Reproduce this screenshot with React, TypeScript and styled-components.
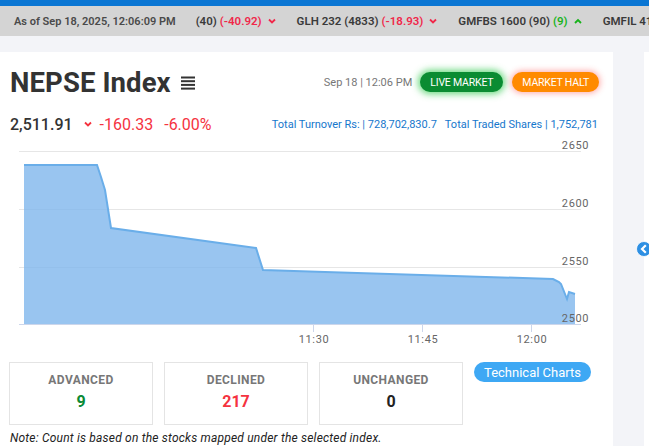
import styled, { createGlobalStyle } from 'styled-components'

const GlobalStyle = createGlobalStyle`
  body {
    margin: 0;
    background: #f3f4f8;
    font-family: Roboto, "Noto Sans", Arial, sans-serif;
    overflow: hidden;
  }
`

interface TickItem {
  label: string
  change: string
  up: boolean
}

const ticks: TickItem[] = [
  { label: '(40)', change: '(-40.92)', up: false },
  { label: 'GLH 232 (4833)', change: '(-18.93)', up: false },
  { label: 'GMFBS 1600 (90)', change: '(9)', up: true },
  { label: 'GMFIL 412 (1200)', change: '(-3.10)', up: false },
]

const stats = [
  { label: 'ADVANCED', value: '9', tone: 'up' },
  { label: 'DECLINED', value: '217', tone: 'down' },
  { label: 'UNCHANGED', value: '0', tone: 'flat' },
]

const Chevron = ({ up, color }: { up?: boolean; color: string }) => (
  <svg width="8" height="6" viewBox="0 0 8 6">
    <path
      d={up ? 'M1 5 L4 2 L7 5' : 'M1 1.5 L4 4.5 L7 1.5'}
      fill="none"
      stroke={color}
      strokeWidth="1.8"
    />
  </svg>
)

const MenuIcon = () => (
  <svg width="14" height="14" viewBox="0 0 14 14">
    <rect x="0" y="0.5" width="14" height="2" fill="#333" />
    <rect x="0" y="4.2" width="14" height="2" fill="#333" />
    <rect x="0" y="7.9" width="14" height="2" fill="#333" />
    <rect x="0" y="11.6" width="14" height="2" fill="#333" />
  </svg>
)

const area =
  '24,25 97,25 101,37 105,50 111,88 256,108 263,130 325,132 553,139 559,142 561,144 567,159 569,152 575,154'

const IndexChart = () => (
  <ChartSvg width="613" height="210" viewBox="0 0 613 210">
    {[11, 69, 127].map((y) => (
      <line key={y} x1="19" x2="581" y1={y + 0.5} y2={y + 0.5} stroke="#e6e6e6" />
    ))}
    <polygon points={`${area} 575,184 24,184`} fill="#7cb5ec" fillOpacity="0.78" />
    <polyline points={area} fill="none" stroke="#6aaee9" strokeWidth="2" />
    <line x1="19" x2="581" y1="184.5" y2="184.5" stroke="#ccd6eb" />
    {[313, 422, 531].map((x) => (
      <line key={x} x1={x + 0.5} x2={x + 0.5} y1="184" y2="192" stroke="#ccd6eb" />
    ))}
    <g fill="#666" fontSize="11" fontFamily="Roboto, sans-serif" letterSpacing="0.6">
      <text x="589" y="9" textAnchor="end">2650</text>
      <text x="589" y="67" textAnchor="end">2600</text>
      <text x="589" y="125" textAnchor="end">2550</text>
      <text x="589" y="182" textAnchor="end">2500</text>
      <text x="314" y="203" textAnchor="middle">11:30</text>
      <text x="423" y="203" textAnchor="middle">11:45</text>
      <text x="532" y="203" textAnchor="middle">12:00</text>
    </g>
  </ChartSvg>
)

const App = () => {
  return (
    <>
      <GlobalStyle />
      <TopStrip />
      <Ticker>
        <AsOf>As of Sep 18, 2025, 12:06:09 PM</AsOf>
        <TickerDivider />
        {ticks.map((t) => (
          <TickerItem key={t.label}>
            <span>{t.label}</span>
            <TickChange $up={t.up}>{t.change}</TickChange>
            <Chevron up={t.up} color={t.up ? '#17b31a' : '#f0284a'} />
          </TickerItem>
        ))}
      </Ticker>
      <Content>
        <Card>
          <HeaderRow>
            <Title>
              NEPSE Index <MenuIcon />
            </Title>
            <HeaderRight>
              <DateStamp>Sep 18 | 12:06 PM</DateStamp>
              <StatusPill $kind="live">LIVE MARKET</StatusPill>
              <StatusPill $kind="halt">MARKET HALT</StatusPill>
            </HeaderRight>
          </HeaderRow>
          <ValueRow>
            <IndexValue>
              <strong>2,511.91</strong>
              <Chevron color="#f5333f" />
              <Change>-160.33</Change>
              <Change>-6.00%</Change>
            </IndexValue>
            <Turnover>
              <span>Total Turnover Rs: | 728,702,830.7</span>
              <span>Total Traded Shares | 1,752,781</span>
            </Turnover>
          </ValueRow>
          <IndexChart />
          <StatsRow>
            {stats.map((s) => (
              <StatBox key={s.label}>
                <StatLabel>{s.label}</StatLabel>
                <StatValue $tone={s.tone}>{s.value}</StatValue>
              </StatBox>
            ))}
            <ChartsButton>Technical Charts</ChartsButton>
          </StatsRow>
          <Note>Note: Count is based on the stocks mapped under the selected index.</Note>
        </Card>
        <SideCard />
        <SideToggle>
          <svg width="16" height="16" viewBox="0 0 16 16">
            <circle cx="8" cy="8" r="7.5" fill="#2d8fe3" stroke="#ffffff" strokeWidth="0.8" />
            <path d="M9.8 4.2 L6 8 L9.8 11.8" fill="none" stroke="#fff" strokeWidth="2.2" />
          </svg>
        </SideToggle>
      </Content>
    </>
  )
}

export default App

const TopStrip = styled.div`
  height: 6px;
  background: #0a76d3;
`

const Ticker = styled.div`
  height: 30px;
  background: #d4d4d4;
  display: flex;
  align-items: center;
  padding-left: 14px;
  white-space: nowrap;
  overflow: hidden;
  font-size: 11.5px;
  font-weight: 600;
  color: #3a3a3a;
`

const AsOf = styled.span`
  font-size: 11px;
  color: #4a4a4a;
`

const TickerDivider = styled.span`
  width: 1px;
  height: 14px;
  background: #9a9a9a;
  margin: 0 10px 0 10px;
`

const TickerItem = styled.span`
  display: inline-flex;
  align-items: center;
  gap: 3px;
  margin-right: 21px;
  svg {
    margin-left: 3px;
  }
`

const TickChange = styled.span<{ $up: boolean }>`
  color: ${(p) => (p.$up ? '#17b31a' : '#f0284a')};
`

const Content = styled.div`
  position: relative;
  display: flex;
  gap: 31px;
  padding-top: 16px;
`

const Card = styled.div`
  width: 613px;
  flex-shrink: 0;
  background: #fff;
  height: 410px;
`

const SideCard = styled.div`
  flex: 1;
  background: #fff;
  height: 410px;
`

const SideToggle = styled.div`
  position: absolute;
  left: 636px;
  top: 205px;
  width: 16px;
  height: 16px;
  svg {
    display: block;
  }
`

const HeaderRow = styled.div`
  display: flex;
  align-items: center;
  justify-content: space-between;
  padding: 14px 14px 0 10px;
  height: 32px;
`

const Title = styled.h1`
  margin: 0;
  display: flex;
  align-items: center;
  gap: 10px;
  font-size: 27.5px;
  font-weight: 700;
  color: #333;
  letter-spacing: 0.1px;
  svg {
    margin-top: 2px;
  }
`

const HeaderRight = styled.div`
  display: flex;
  align-items: center;
`

const DateStamp = styled.span`
  font-size: 11px;
  color: #777;
  margin-right: 8px;
`

const StatusPill = styled.span<{ $kind: 'live' | 'halt' }>`
  display: inline-flex;
  align-items: center;
  justify-content: center;
  height: 20px;
  padding: 0 10px;
  border-radius: 10px;
  font-size: 10.5px;
  letter-spacing: -0.2px;
  color: #fff;
  margin-left: ${(p) => (p.$kind === 'halt' ? '9px' : '0')};
  background: ${(p) => (p.$kind === 'live' ? '#0a8c32' : '#ff8a00')};
  box-shadow: ${(p) =>
    p.$kind === 'live' ? '0 0 7px 2px rgba(40, 200, 70, 0.7)' : '0 0 6px 1px rgba(255, 60, 60, 0.45)'};
`

const ValueRow = styled.div`
  display: flex;
  align-items: center;
  justify-content: space-between;
  padding: 10px 15px 0 10px;
  height: 32px;
`

const IndexValue = styled.div`
  display: flex;
  align-items: center;
  font-size: 16px;
  strong {
    font-weight: 500;
    color: #333;
    margin-right: 11px;
  }
  svg {
    margin-right: 8px;
  }
`

const Change = styled.span`
  color: #f5333f;
  margin-right: 11px;
`

const Turnover = styled.div`
  display: flex;
  gap: 8px;
  font-size: 11px;
  color: #1677cc;
`

const ChartSvg = styled.svg`
  display: block;
`

const StatsRow = styled.div`
  display: flex;
  align-items: flex-start;
  gap: 11px;
  padding: 12px 0 0 9px;
`

const StatBox = styled.div`
  width: 142px;
  height: 51px;
  padding-top: 10px;
  border: 1px solid #e4e4e4;
  display: flex;
  flex-direction: column;
  align-items: center;
  gap: 5px;
`

const StatLabel = styled.span`
  font-size: 12px;
  font-weight: 700;
  color: #777;
  letter-spacing: 0.4px;
`

const StatValue = styled.span<{ $tone: string }>`
  font-size: 16px;
  font-weight: 700;
  color: ${(p) => (p.$tone === 'up' ? '#0b8a35' : p.$tone === 'down' ? '#f5333f' : '#222')};
`

const ChartsButton = styled.button`
  height: 20px;
  padding: 0 10px;
  border: none;
  border-radius: 10px;
  background: #3ea8f4;
  color: #fff;
  font-family: inherit;
  font-size: 13px;
`

const Note = styled.p`
  margin: 6px 0 0 10px;
  font-size: 12px;
  letter-spacing: 0.2px;
  font-style: italic;
  color: #222;
`
